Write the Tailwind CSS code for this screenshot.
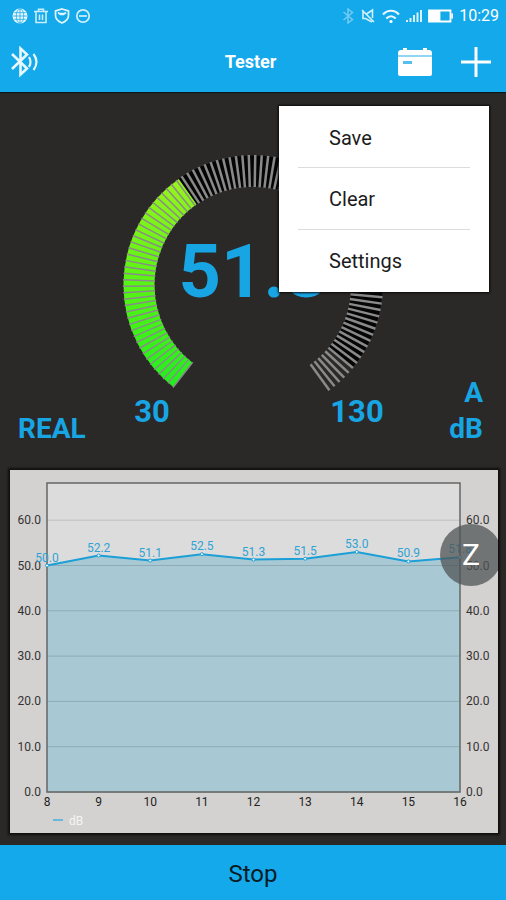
<!DOCTYPE html>
<html lang="en">
<head>
    <meta charset="UTF-8">
    <meta name="viewport" content="width=device-width, initial-scale=1.0">
    <title>Tester</title>
    <script src="https://cdn.jsdelivr.net/npm/@tailwindcss/browser@4"></script>
</head>
<body class="bg-[#2a2927] font-['Roboto',sans-serif] min-h-screen flex flex-col">
    <header class="relative bg-[#13a9ea] text-white shadow-[0_1px_1px_#10181c]">
        <!-- Status bar -->
        <div class="flex items-center justify-between h-8 pl-3 pr-[7px]">
            <div class="flex items-center gap-[5px]">
                <svg class="w-4 h-4" viewBox="0 0 16 16" fill="none" stroke="#13a9ea" stroke-width="0.8">
                    <circle cx="8" cy="8" r="7.5" fill="#f0fafe" stroke="none"/>
                    <path d="M8 1v14M1 8h14M2.2 4.700h11.600M2.200 11.300h11.600"/>
                    <ellipse cx="8" cy="8" rx="3.800" ry="7"/>
                </svg>
                <svg class="w-4 h-4" viewBox="0 0 16 16" fill="none" stroke="#c9edfb" stroke-width="1.6">
                    <path d="M1 3.500h14M5.500 3.300V1.200h5v2.100M3 3.700v10.800h10V3.700M6.500 6.500v5.500M9.500 6.500v5.500"/>
                </svg>
                <svg class="w-4 h-4" viewBox="0 0 16 16" fill="none" stroke="#e0f5fd" stroke-width="1.7">
                    <path d="M8 1l6.500 2v4.500c0 3.500-3 6-6.500 7.500-3.500-1.500-6.500-4-6.500-7.500V3z"/>
                    <path d="M4 4.500l2.500 2h3l2.500-2M6 5.500h4"/>
                </svg>
                <svg class="w-4 h-4" viewBox="0 0 16 16" fill="none" stroke="#d0effb" stroke-width="1.7">
                    <circle cx="8" cy="8" r="6.200"/>
                    <path d="M4 8h8"/>
                </svg>
            </div>
            <div class="flex items-center gap-1.5">
                <svg class="w-3 h-4 opacity-40" viewBox="0 0 12 16" fill="none" stroke="#fff" stroke-width="1.5">
                    <path d="M1.500 4l9 7.500L6 15V1l4.500 3.500-9 7.500"/>
                </svg>
                <svg class="w-4 h-4" viewBox="0 0 16 16" fill="none" stroke="#d4f1fc" stroke-width="1.6">
                    <path d="M2 2l12 12M3 3.500v7h2.500L12 14M6.500 6L12.500 2v8"/>
                </svg>
                <svg class="w-[18px] h-4" viewBox="0 0 18 16" fill="none" stroke="#e6f7fd" stroke-width="2.2">
                    <path d="M1 6.500c4.500-5 11.500-5 16 0M4.300 10.500c3-3 6.400-3 9.400 0"/>
                    <circle cx="9" cy="13.500" r="1.600" fill="#fff" stroke="none"/>
                </svg>
                <svg class="w-4 h-4" viewBox="0 0 16 16" fill="#d8f2fc">
                    <path d="M0 12h2v2H0zM3.500 10h2v4h-2zM7 7h2v7H7zM10.500 4.500h2V14h-2zM14 2h2v12h-2z"/>
                </svg>
                <svg class="w-[25px] h-4" viewBox="0 0 25 16" fill="none" stroke="#fff" stroke-width="1.800">
                    <path d="M1 2.500h21.500v11H1z"/>
                    <path d="M2 4h9.500v8H2z" fill="#fff"/>
                    <path d="M24.200 5.500v5"/>
                </svg>
                <span class="text-base leading-4">10:29</span>
            </div>
        </div>
        <!-- Title bar -->
        <div class="grid grid-cols-[1fr_auto_1fr] items-center h-[60px] pl-2.5 pr-[15px]">
            <button type="button" aria-label="Bluetooth" class="justify-self-start">
                <svg class="w-8 h-8" viewBox="0 0 32 32" fill="none" stroke="#e6f7fd" stroke-width="2.600">
                    <path d="M2 8l15 14.500-6.500 6V2.500L17 8.500 2 23"/>
                    <path d="M19 11q3 5 0 10M23.500 8q6 8 0 16" stroke-width="2.200"/>
                </svg>
            </button>
            <h1 class="text-lg font-bold">Tester</h1>
            <div class="flex items-center gap-[29px] justify-self-end">
                <button type="button" aria-label="History">
                    <svg class="w-[34px] h-7" viewBox="0 0 34 28">
                        <path d="M5 0h4v2h16V0h4v2h2q3 0 3 3v2H0V5q0-3 3-3h2zM0 9h34v17q0 2-2 2H2q-2 0-2-2z" fill="#fff"/>
                        <path d="M0 7h34v2H0z" fill="#8fd6f5"/>
                        <path d="M5 13h9v3H5z" fill="#55bfee"/>
                    </svg>
                </button>
                <button type="button" aria-label="Menu">
                    <svg class="w-[30px] h-[30px]" viewBox="0 0 30 30" stroke="#fff" stroke-width="3">
                        <path d="M15 0v30M0 15h30"/>
                    </svg>
                </button>
            </div>
        </div>

        <!-- Dropdown menu -->
        <nav class="absolute z-10 right-[17px] top-[106px] w-[210px] px-[19px] bg-white text-[#1c1c1c] text-xl shadow-[0_0_2px_1px_#0a0a0a] divide-y divide-[#dcdcdc]">
            <button type="button" class="block w-full h-[62px] pt-0.5 pl-[31px] text-left">Save</button>
            <button type="button" class="block w-full h-[62px] pl-[31px] text-left">Clear</button>
            <button type="button" class="block w-full h-[62px] pl-[31px] text-left">Settings</button>
        </nav>
    </header>

    <main class="flex-1 flex flex-col">
        <!-- Gauge -->
        <section class="grid grid-cols-[1fr_260px_1fr] items-end pt-[63px] pb-[23px] text-[#18a5e4] font-bold text-[28px] leading-9">
            <p class="pl-[18px] whitespace-nowrap">REAL</p>
            <svg class="w-full h-auto" viewBox="0 0 260 292" font-size="31" fill="#18a5e4" text-anchor="middle">
                <defs>
                    <linearGradient id="level" gradientUnits="userSpaceOnUse" x1="60" y1="230" x2="60" y2="25">
                        <stop offset="0" stop-color="#20f01c"/>
                        <stop offset="0.500" stop-color="#58f414"/>
                        <stop offset="1" stop-color="#98f41c"/>
                    </linearGradient>
                </defs>
                <g id="gauge"></g>
                <text x="130" y="142" font-size="74">51.8</text>
                <text x="29" y="267">30</text>
                <text x="234" y="267">130</text>
            </svg>
            <p class="pr-[23px] text-right">A<br>dB</p>
        </section>

        <!-- Chart -->
        <section class="relative ml-2.5 mr-2 mb-3">
            <svg id="chart" class="block w-full h-auto bg-[#d4d2d0] shadow-[0_0_2px_2px_#11100f]" viewBox="0 0 488 363" font-size="12" fill="#333">
                <rect x="37" y="13" width="413" height="309" fill="#dcdcdc"/>
                <g id="plot"></g>
                <rect x="37" y="13" width="413" height="309" fill="none" stroke="#666" stroke-width="1.500"/>
                <g id="labels"></g>
                <path d="M43 350h10" stroke="#69b8dc" stroke-width="2"/>
                <text x="59" y="355" fill="#f4f4f4">dB</text>
            </svg>
            <button type="button" class="absolute top-[54px] right-0 w-[58px] h-[62px] overflow-hidden text-white">
                <span class="block w-[62px] h-[62px] rounded-full bg-[#505456]/75 text-3xl leading-[62px] text-center">Z</span>
            </button>
        </section>
    </main>

    <button type="button" class="w-full h-[55px] pt-0.5 bg-[#13a9ea] text-[#0b1c26] text-2xl">Stop</button>

    <script>
        const NS = 'http://www.w3.org/2000/svg';

        function add(parent, name, attrs, text) {
            const el = document.createElementNS(NS, name);
            for (const key in attrs) el.setAttribute(key, attrs[key]);
            if (text) el.textContent = text;
            parent.appendChild(el);
        }

        // Gauge: ring from START to END degrees, filled up to LEVEL
        const gauge = document.getElementById('gauge');
        const START = 128, END = 414, LEVEL = 235, TICKS = 100;

        function point(r, deg) {
            const a = deg * Math.PI / 180;
            return [130 + r * Math.cos(a), 130 + r * Math.sin(a)];
        }

        function arc(from, to, color) {
            const large = to - from > 180 ? 1 : 0;
            add(gauge, 'path', {
                d: `M${point(114, from)}A114 114 0 ${large} 1 ${point(114, to)}`,
                fill: 'none', stroke: color, 'stroke-width': 31
            });
        }

        arc(LEVEL, 400, '#050505');
        arc(START, LEVEL, 'url(#level)');
        for (let i = 0; i <= TICKS; i++) {
            const deg = START + (END - START) * i / TICKS;
            const [x1, y1] = point(98, deg);
            const [x2, y2] = point(130, deg);
            add(gauge, 'line', { x1, y1, x2, y2, stroke: '#8a8a8a', 'stroke-width': deg < LEVEL ? 1.5 : 2.5 });
        }

        // Chart
        const plot = document.getElementById('plot');
        const labels = document.getElementById('labels');
        const values = [50.0, 52.2, 51.1, 52.5, 51.3, 51.5, 53.0, 50.9, 51.8];
        const px = i => 37 + i * 413 / 8;
        const py = v => 322 - v * 4.53;
        const line = values.map((v, i) => `${px(i)},${py(v)}`).join(' ');

        add(plot, 'polygon', { points: `37,322 ${line} 450,322`, fill: '#a8c9d4' });
        for (let v = 0; v <= 60; v += 10) {
            add(plot, 'path', { d: `M37 ${py(v)}H450`, stroke: v > 50 ? '#bfbfbf' : '#8fabb5' });
            add(labels, 'text', { x: 31, y: py(v) + 4, 'text-anchor': 'end' }, v.toFixed(1));
            add(labels, 'text', { x: 456, y: py(v) + 4 }, v.toFixed(1));
        }
        add(plot, 'polyline', { points: line, fill: 'none', stroke: '#1b9fd6', 'stroke-width': 2 });
        values.forEach((v, i) => {
            add(labels, 'circle', { cx: px(i), cy: py(v), r: 1.5, fill: '#fff', stroke: '#1b9fd6' });
            add(labels, 'text', { x: px(i), y: py(v) - 4, 'text-anchor': 'middle', fill: '#2fa3d4' }, v.toFixed(1));
            add(labels, 'text', { x: px(i), y: 336, 'text-anchor': 'middle', fill: '#222' }, String(i + 8));
        });
    </script>
</body>
</html>
